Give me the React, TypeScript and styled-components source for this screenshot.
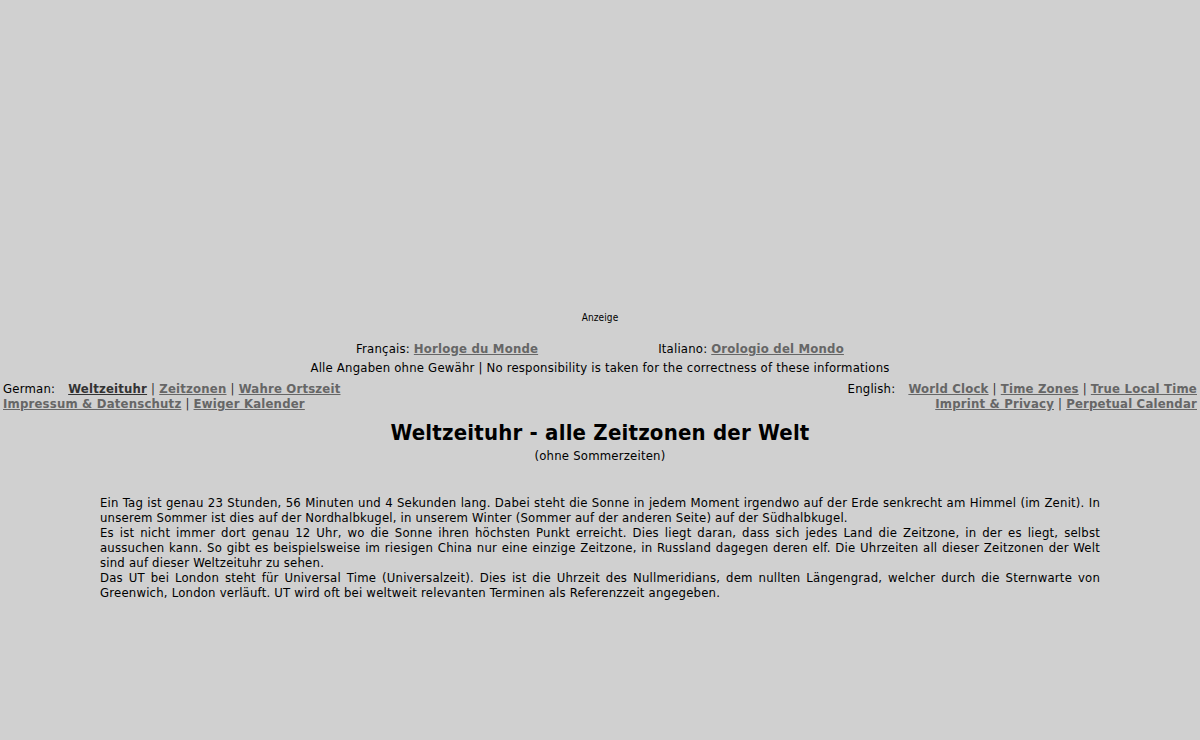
import React from "react";
import styled, { createGlobalStyle } from "styled-components";

const Global = createGlobalStyle`
  html, body { margin: 0; padding: 0; background: #d0d0d0; }
  body {
    font-family: "DejaVu Sans Condensed", "DejaVu Sans", sans-serif;
    font-size: 13px;
    letter-spacing: 0.2px;
    color: #000;
  }
`;

const Page = styled.div`
  padding: 0 3px;
`;

const AdSpace = styled.div`
  height: 312px;
`;

const AdLabel = styled.div`
  text-align: center;
  font-size: 10px;
  line-height: 12px;
  letter-spacing: 0.1px;
  color: #000;
`;

const LangRow = styled.div`
  display: flex;
  justify-content: center;
  gap: 120px;
  margin-top: 15px;
  line-height: 19px;
`;

const Disclaimer = styled.div`
  text-align: center;
  line-height: 19px;
`;

const NavRow = styled.div`
  display: flex;
  justify-content: space-between;
  margin-top: 4px;
  line-height: 15px;
`;

const NavCol = styled.div<{ $right?: boolean }>`
  text-align: ${(p) => (p.$right ? "right" : "left")};
`;

const Label = styled.span`
  margin-right: 13px;
`;

const Link = styled.a<{ $active?: boolean }>`
  color: ${(p) => (p.$active ? "#333333" : "#666666")};
  font-weight: bold;
  text-decoration: underline;
`;

const Sep = styled.span`
  color: #333;
  margin: 0 4px;
`;

const Title = styled.h1`
  margin: 8px 0 0;
  text-align: center;
  font-size: 22px;
  line-height: 28px;
  font-weight: bold;
  letter-spacing: 0.2px;
`;

const Subtitle = styled.div`
  text-align: center;
  line-height: 18px;
`;

const Text = styled.div`
  margin: 30px 97px 0;
  text-align: justify;
  line-height: 15px;
`;

export default function App() {
  return (
    <>
      <Global />
      <Page>
        <AdSpace />
        <AdLabel>Anzeige</AdLabel>
        <LangRow>
          <span>
            Français: <Link href="#">Horloge du Monde</Link>
          </span>
          <span>
            Italiano: <Link href="#">Orologio del Mondo</Link>
          </span>
        </LangRow>
        <Disclaimer>
          Alle Angaben ohne Gewähr | No responsibility is taken for the correctness of these informations
        </Disclaimer>
        <NavRow>
          <NavCol>
            <Label>German:</Label>
            <Link href="#" $active>Weltzeituhr</Link>
            <Sep>|</Sep>
            <Link href="#">Zeitzonen</Link>
            <Sep>|</Sep>
            <Link href="#">Wahre Ortszeit</Link>
            <br />
            <Link href="#">Impressum &amp; Datenschutz</Link>
            <Sep>|</Sep>
            <Link href="#">Ewiger Kalender</Link>
          </NavCol>
          <NavCol $right>
            <Label>English:</Label>
            <Link href="#">World Clock</Link>
            <Sep>|</Sep>
            <Link href="#">Time Zones</Link>
            <Sep>|</Sep>
            <Link href="#">True Local Time</Link>
            <br />
            <Link href="#">Imprint &amp; Privacy</Link>
            <Sep>|</Sep>
            <Link href="#">Perpetual Calendar</Link>
          </NavCol>
        </NavRow>
        <Title>Weltzeituhr - alle Zeitzonen der Welt</Title>
        <Subtitle>(ohne Sommerzeiten)</Subtitle>
        <Text>
          Ein Tag ist genau 23 Stunden, 56 Minuten und 4 Sekunden lang. Dabei steht die Sonne in jedem Moment irgendwo auf der Erde senkrecht am Himmel (im Zenit). In unserem Sommer ist dies auf der Nordhalbkugel, in unserem Winter (Sommer auf der anderen Seite) auf der Südhalbkugel.
          <br />
          Es ist nicht immer dort genau 12 Uhr, wo die Sonne ihren höchsten Punkt erreicht. Dies liegt daran, dass sich jedes Land die Zeitzone, in der es liegt, selbst aussuchen kann. So gibt es beispielsweise im riesigen China nur eine einzige Zeitzone, in Russland dagegen deren elf. Die Uhrzeiten all dieser Zeitzonen der Welt sind auf dieser Weltzeituhr zu sehen.
          <br />
          Das UT bei London steht für Universal Time (Universalzeit). Dies ist die Uhrzeit des Nullmeridians, dem nullten Längengrad, welcher durch die Sternwarte von Greenwich, London verläuft. UT wird oft bei weltweit relevanten Terminen als Referenzzeit angegeben.
        </Text>
      </Page>
    </>
  );
}
